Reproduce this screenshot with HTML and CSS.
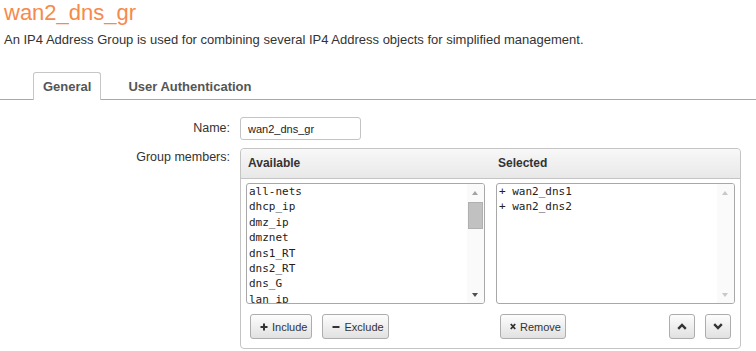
FILE: index.html
```html
<!DOCTYPE html>
<html lang="en">
<head>
    <meta charset="UTF-8">
    <title>wan2_dns_gr</title>
    <link rel="stylesheet" href="styles.css">
</head>
<body>
    <h1 class="title">wan2_dns_gr</h1>
    <p class="intro">An IP4 Address Group is used for combining several IP4 Address objects for simplified management.</p>

    <div class="tabs">
        <div class="tab active">General</div>
        <div class="tab">User Authentication</div>
    </div>

    <div class="form">
        <label class="label">Name:</label>
        <div><input class="text-input" type="text" value="wan2_dns_gr"></div>

        <label class="label label-top">Group members:</label>
        <div class="panel">
            <div class="panel-head">
                <div>Available</div>
                <div>Selected</div>
            </div>
            <div class="panel-body">
                <div class="listbox">
                    <div class="items">
                        <div>all-nets</div>
                        <div>dhcp_ip</div>
                        <div>dmz_ip</div>
                        <div>dmznet</div>
                        <div>dns1_RT</div>
                        <div>dns2_RT</div>
                        <div>dns_G</div>
                        <div>lan_ip</div>
                    </div>
                    <div class="scrollbar">
                        <div class="arrow up"></div>
                        <div class="track"><div class="thumb"></div></div>
                        <div class="arrow down"></div>
                    </div>
                </div>
                <div class="listbox">
                    <div class="items">
                        <div>+ wan2_dns1</div>
                        <div>+ wan2_dns2</div>
                    </div>
                    <div class="scrollbar disabled">
                        <div class="arrow up"></div>
                        <div class="track"></div>
                        <div class="arrow down"></div>
                    </div>
                </div>

                <div class="btn-row">
                    <button class="btn">
                        <svg width="8" height="8" viewBox="0 0 8 8"><path d="M4 0.5V7.5M0.5 4H7.5" stroke="#333" stroke-width="2"/></svg>
                        <span>Include</span>
                    </button>
                    <button class="btn">
                        <svg width="8" height="8" viewBox="0 0 8 8"><path d="M0.5 4H7.5" stroke="#333" stroke-width="2"/></svg>
                        <span>Exclude</span>
                    </button>
                </div>
                <div class="btn-row">
                    <button class="btn">
                        <svg width="6" height="7" viewBox="0 0 6 7"><path d="M0.8 1L5.2 6M5.2 1L0.8 6" stroke="#333" stroke-width="1.8"/></svg>
                        <span>Remove</span>
                    </button>
                    <span class="spacer"></span>
                    <button class="btn btn-icon">
                        <svg width="10" height="7" viewBox="0 0 10 7"><path d="M1.2 5.8L5 2L8.8 5.8" fill="none" stroke="#333" stroke-width="2.4"/></svg>
                    </button>
                    <button class="btn btn-icon">
                        <svg width="10" height="7" viewBox="0 0 10 7"><path d="M1.2 1.2L5 5L8.8 1.2" fill="none" stroke="#333" stroke-width="2.4"/></svg>
                    </button>
                </div>
            </div>
        </div>
    </div>
</body>
</html>
```

FILE: styles.css
```css
body {
    margin: 0;
    font-family: "Liberation Sans", Arial, sans-serif;
    color: #333;
    background: #fff;
}
.title {
    margin: 0;
    padding: 0 4px;
    font-size: 22px;
    font-weight: normal;
    line-height: 26px;
    color: #f68a4c;
}
.intro {
    margin: 6px 0 0;
    padding: 0 4px;
    font-size: 13px;
    line-height: 16px;
}
.tabs {
    display: flex;
    margin-top: 24px;
    padding-left: 33px;
    border-bottom: 1px solid #a9a9a9;
    height: 27px;
}
.tab {
    padding: 0 12px;
    font-size: 13px;
    font-weight: bold;
    color: #555;
    line-height: 27px;
    border: 1px solid transparent;
    border-bottom: none;
}
.tab.active {
    padding: 0 9px;
    margin-right: 14px;
    background: #fff;
    border-color: #c6c6c6;
    border-radius: 3px 3px 0 0;
    height: 27px;
    margin-bottom: -1px;
}
.form {
    display: grid;
    grid-template-columns: 230px 501px;
    column-gap: 10px;
    row-gap: 8px;
    margin-top: 17px;
}
.label {
    text-align: right;
    font-size: 12.5px;
    line-height: 22px;
}
.label-top {
    line-height: 16px;
    padding-top: 1px;
}
.text-input {
    box-sizing: border-box;
    width: 121px;
    height: 23px;
    margin: 0;
    padding: 0 7px;
    border: 1px solid #c4c4c4;
    border-radius: 3px;
    font-family: "Liberation Sans", Arial, sans-serif;
    font-size: 11px;
    color: #222;
}
.panel {
    border: 1px solid #c4c4c4;
    border-radius: 4px;
    height: 201px;
    box-sizing: border-box;
}
.panel-head {
    display: grid;
    grid-template-columns: 1fr 1fr;
    column-gap: 11px;
    padding: 0 5px;
    height: 29px;
    border-bottom: 1px solid #c4c4c4;
    border-radius: 4px 4px 0 0;
    background: linear-gradient(#f8f8f8, #e8e8e8);
    font-size: 12px;
    font-weight: bold;
    line-height: 29px;
}
.panel-head div {
    padding-left: 2px;
}
.panel-body {
    display: grid;
    grid-template-columns: 1fr 1fr;
    column-gap: 11px;
    row-gap: 10px;
    padding: 4px 5px 0;
}
.listbox {
    display: flex;
    height: 121px;
    box-sizing: border-box;
    border: 1px solid #a8a8a8;
    border-radius: 3px;
    overflow: hidden;
    background: #fff;
}
.items {
    flex: 1;
    padding-left: 2px;
    font-family: "DejaVu Sans Mono", monospace;
    font-size: 11px;
    line-height: 15.4px;
    color: #222;
    overflow: hidden;
}
.scrollbar {
    width: 17px;
    display: flex;
    flex-direction: column;
    background: #fafafa;
}
.arrow {
    height: 17px;
    position: relative;
}
.arrow::after {
    content: "";
    position: absolute;
    left: 5px;
    border-left: 3.5px solid transparent;
    border-right: 3.5px solid transparent;
}
.arrow.up::after {
    top: 7px;
    border-bottom: 4px solid #a3a3a3;
}
.arrow.down::after {
    top: 7px;
    border-top: 4px solid #505050;
}
.track {
    flex: 1;
}
.thumb {
    margin: 1px 1px 0 1px;
    height: 27px;
    background: #c1c1c1;
    border: 1px solid #b0b0b0;
    box-sizing: border-box;
}
.scrollbar.disabled .arrow.up::after {
    border-bottom-color: #c8c8c8;
}
.scrollbar.disabled .arrow.down::after {
    border-top-color: #c8c8c8;
}
.btn-row {
    display: flex;
    gap: 10px;
    padding: 0 4px;
}
.spacer {
    flex: 1;
}
.btn {
    display: flex;
    align-items: center;
    gap: 4px;
    height: 25px;
    margin: 0;
    padding: 0 4px 0 9px;
    border: 1px solid #adadad;
    border-radius: 3px;
    background: linear-gradient(#fdfdfd, #e1e1e1);
    font-family: "Liberation Sans", Arial, sans-serif;
    font-size: 11px;
    line-height: 14px;
    color: #333;
    cursor: pointer;
}
.btn-icon {
    width: 26px;
    padding: 0;
    justify-content: center;
}
```
